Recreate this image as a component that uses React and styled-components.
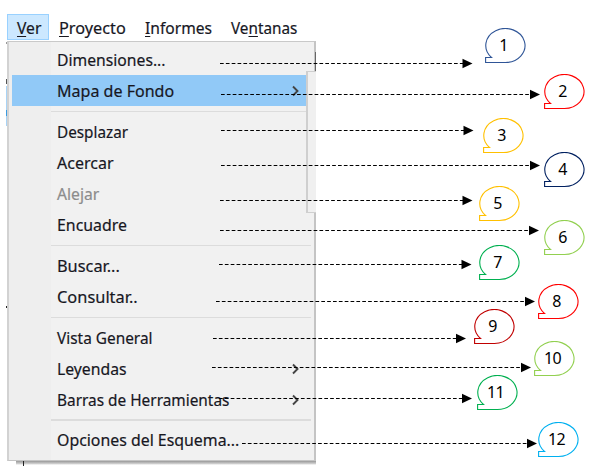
import React, { useLayoutEffect, useRef } from "react";
import styled, { createGlobalStyle } from "styled-components";

const Global = createGlobalStyle`
  * { box-sizing: border-box; }
  body { margin: 0; background: #fff; overflow: hidden; }
`;

const Page = styled.main`
  position: relative;
  display: flex;
  flex-direction: column;
  width: 594px;
  height: 469px;
  padding-top: 14px;
  overflow: hidden;
  background: #fff;
  color: #17171f;
  font: 17px/20px "Noto Sans", "Open Sans", sans-serif;
`;

const MenuBar = styled.nav`
  display: flex;
  height: 27px;
  padding-left: 7px;
`;

const BarItem = styled.div`
  width: ${(p) => p.$width}px;
  height: 26px;
  padding: 3px 0 0 9px;
  border: 1px solid ${(p) => (p.$open ? "#99d1ff" : "transparent")};
  background: ${(p) => (p.$open ? "#cce8ff" : "transparent")};
  white-space: nowrap;
`;

const Mnemonic = styled.span`
  text-decoration: underline;
  text-decoration-thickness: 1px;
  text-underline-offset: 2px;
`;

const Label = styled.span`
  display: inline-block;
  white-space: nowrap;
  transform-origin: 0 50%;
  -webkit-text-stroke: 0.2px currentColor;
`;

const Body = styled.div`
  display: flex;
  height: 420px;
`;

/* Sliver of the window that the open menu leaves uncovered. */
const WindowEdge = styled.div`
  width: 7px;
  padding-left: 6px;
  background: linear-gradient(
      #fff 1px, #999 1px 3px, #fff 3px 38px, #555 38px 43px, #fff 43px 45px,
      #a9d3f5 45px 69px, #3c9be0 69px 75px, #a9d3f5 75px 85px, #fff 85px 265px,
      #222 265px 267px, #fff 267px
    )
    content-box;
`;

const Menu = styled.section`
  display: flex;
  flex-direction: column;
  width: 309px;
  padding: 2.4px 2px 0 3px;
  border: 1px solid #c9c9c9;
  border-left: 2px solid #d2d2d2;
  border-right: 2px solid #c4c4c4;
  border-bottom-color: #c4c4c4;
  background: linear-gradient(to right, #eeeeee 42px, #f1f1f1 42px);
`;

const Row = styled.div`
  display: flex;
  align-items: center;
  justify-content: space-between;
  height: 31px;
  width: 295px;
  padding: 0 7px 0 44.5px;
  color: ${(p) => (p.$disabled ? "#8c8c8c" : "inherit")};
  background: ${(p) => (p.$active ? "#91c9f7" : "transparent")};
`;

const Separator = styled.hr`
  width: 260px;
  height: 1.5px;
  margin: 4.4px 0 4px 39px;
  border: 0;
  background: #dcdcdc;
`;

const MenuShadow = styled.div`
  width: 300px;
  height: 4px;
  margin-left: 16px;
  padding-left: 7px;
  background: linear-gradient(#999, #c8c8c8 60%, #fff);

  &::before {
    content: "";
    display: block;
    width: 1px;
    height: 5px;
    background: #222;
  }
`;

const SubmenuEdge = styled.div`
  position: absolute;
  left: 306px;
  top: 71px;
  width: 10px;
  height: 142px;
  border: solid #cfcfcf;
  border-width: 1px 0 1px 2px;
  background: #f0f0f0;

  &::before {
    content: "";
    display: block;
    width: 1px;
    height: 19px;
    margin: -20px 0 0 7px;
    background: #666;
  }
`;

const ArrowLayer = styled.svg`
  position: absolute;
  inset: 0;
`;

const Callout = styled.div`
  position: absolute;
  left: ${(p) => p.$x}px;
  top: ${(p) => p.$y}px;
  display: grid;
  width: 41px;
  height: 36px;
  color: #000;
  font: 16px/20px "Noto Sans", sans-serif;

  & > * { grid-area: 1 / 1; }
`;

const Number = styled.span`
  place-self: center;
  padding: 0 4px 2px 0;
  letter-spacing: -0.6px;
`;

function FitLabel({ width, children }) {
  const ref = useRef(null);
  useLayoutEffect(() => {
    const el = ref.current;
    el.style.transform = `scaleX(${width / el.offsetWidth})`;
  }, [width]);
  return <Label ref={ref}>{children}</Label>;
}

const Chevron = () => (
  <svg width="8" height="12" viewBox="0 0 8 12" fill="none" stroke="#444" strokeWidth="1.9">
    <path d="M1 1.5L5.5 6L1 10.5" />
  </svg>
);

const barItems = [
  { pre: "", key: "V", post: "er", width: 42, text: 24, open: true },
  { pre: "", key: "P", post: "royecto", width: 86, text: 67 },
  { pre: "", key: "I", post: "nformes", width: 86, text: 67 },
  { pre: "Ve", key: "n", post: "tanas", width: 84, text: 66.5 },
];

const menuItems = [
  { text: "Dimensiones...", width: 109 },
  { text: "Mapa de Fondo", width: 117, active: true, sub: true },
  null,
  { text: "Desplazar", width: 71 },
  { text: "Acercar", width: 56.5 },
  { text: "Alejar", width: 42.5, disabled: true },
  { text: "Encuadre", width: 70 },
  null,
  { text: "Buscar...", width: 62.5 },
  { text: "Consultar..", width: 81 },
  null,
  { text: "Vista General", width: 96 },
  { text: "Leyendas", width: 69.5, sub: true },
  { text: "Barras de Herramientas", width: 172, sub: true },
  null,
  { text: "Opciones del Esquema...", width: 182 },
];

const notes = [
  { x: 485, y: 28, color: "#2f5597", line: [220, 472.5, 63.5] },
  { x: 544, y: 74, color: "#ff0000", line: [221, 540, 94.5] },
  { x: 483, y: 118, color: "#ffc000", line: [221, 473.5, 130.5] },
  { x: 544, y: 152, color: "#002060", line: [221, 540, 165.5] },
  { x: 479, y: 186, color: "#ffc000", line: [220, 472.5, 200.5] },
  { x: 544, y: 220, color: "#92d050", line: [220, 539, 230.5] },
  { x: 479, y: 245, color: "#00b050", line: [219, 471.5, 264.5] },
  { x: 538, y: 284, color: "#ff0000", line: [216, 535, 301.5] },
  { x: 474, y: 309, color: "#c00000", line: [213, 466, 338.5] },
  { x: 534, y: 341, color: "#92d050", line: [212, 531, 367.5] },
  { x: 477, y: 375, color: "#00b050", line: [219, 472, 398.5] },
  { x: 538, y: 422, color: "#00b0f0", line: [242, 537, 443.5] },
];

export default function App() {
  return (
    <Page>
      <Global />
      <MenuBar>
        {barItems.map((b) => (
          <BarItem key={b.post} $width={b.width} $open={b.open}>
            <FitLabel width={b.text}>
              {b.pre}
              <Mnemonic>{b.key}</Mnemonic>
              {b.post}
            </FitLabel>
          </BarItem>
        ))}
      </MenuBar>
      <Body>
        <WindowEdge />
        <Menu>
          {menuItems.map((m, i) =>
            m ? (
              <Row key={i} $active={m.active} $disabled={m.disabled}>
                <FitLabel width={m.width}>{m.text}</FitLabel>
                {m.sub && <Chevron />}
              </Row>
            ) : (
              <Separator key={i} />
            )
          )}
        </Menu>
      </Body>
      <MenuShadow />
      <SubmenuEdge />
      <ArrowLayer width="594" height="469">
        {notes.map(({ line: [x1, x2, y] }, i) => (
          <g key={i}>
            <line x1={x1} x2={x2 - 9} y1={y} y2={y} stroke="#000" strokeDasharray="3.7 2.15" />
            <path d={`M${x2} ${y}l-10 -4.7v9.4z`} />
          </g>
        ))}
      </ArrowLayer>
      {notes.map((n, i) => (
        <Callout key={i} $x={n.x} $y={n.y}>
          <svg width="41" height="36" fill="#fff" stroke={n.color} strokeWidth="1.1">
            <path d="M0.6 34.5V29.5H6.5A19.6 17 0 1 1 20 34.5Z" />
          </svg>
          <Number>{i + 1}</Number>
        </Callout>
      ))}
    </Page>
  );
}
